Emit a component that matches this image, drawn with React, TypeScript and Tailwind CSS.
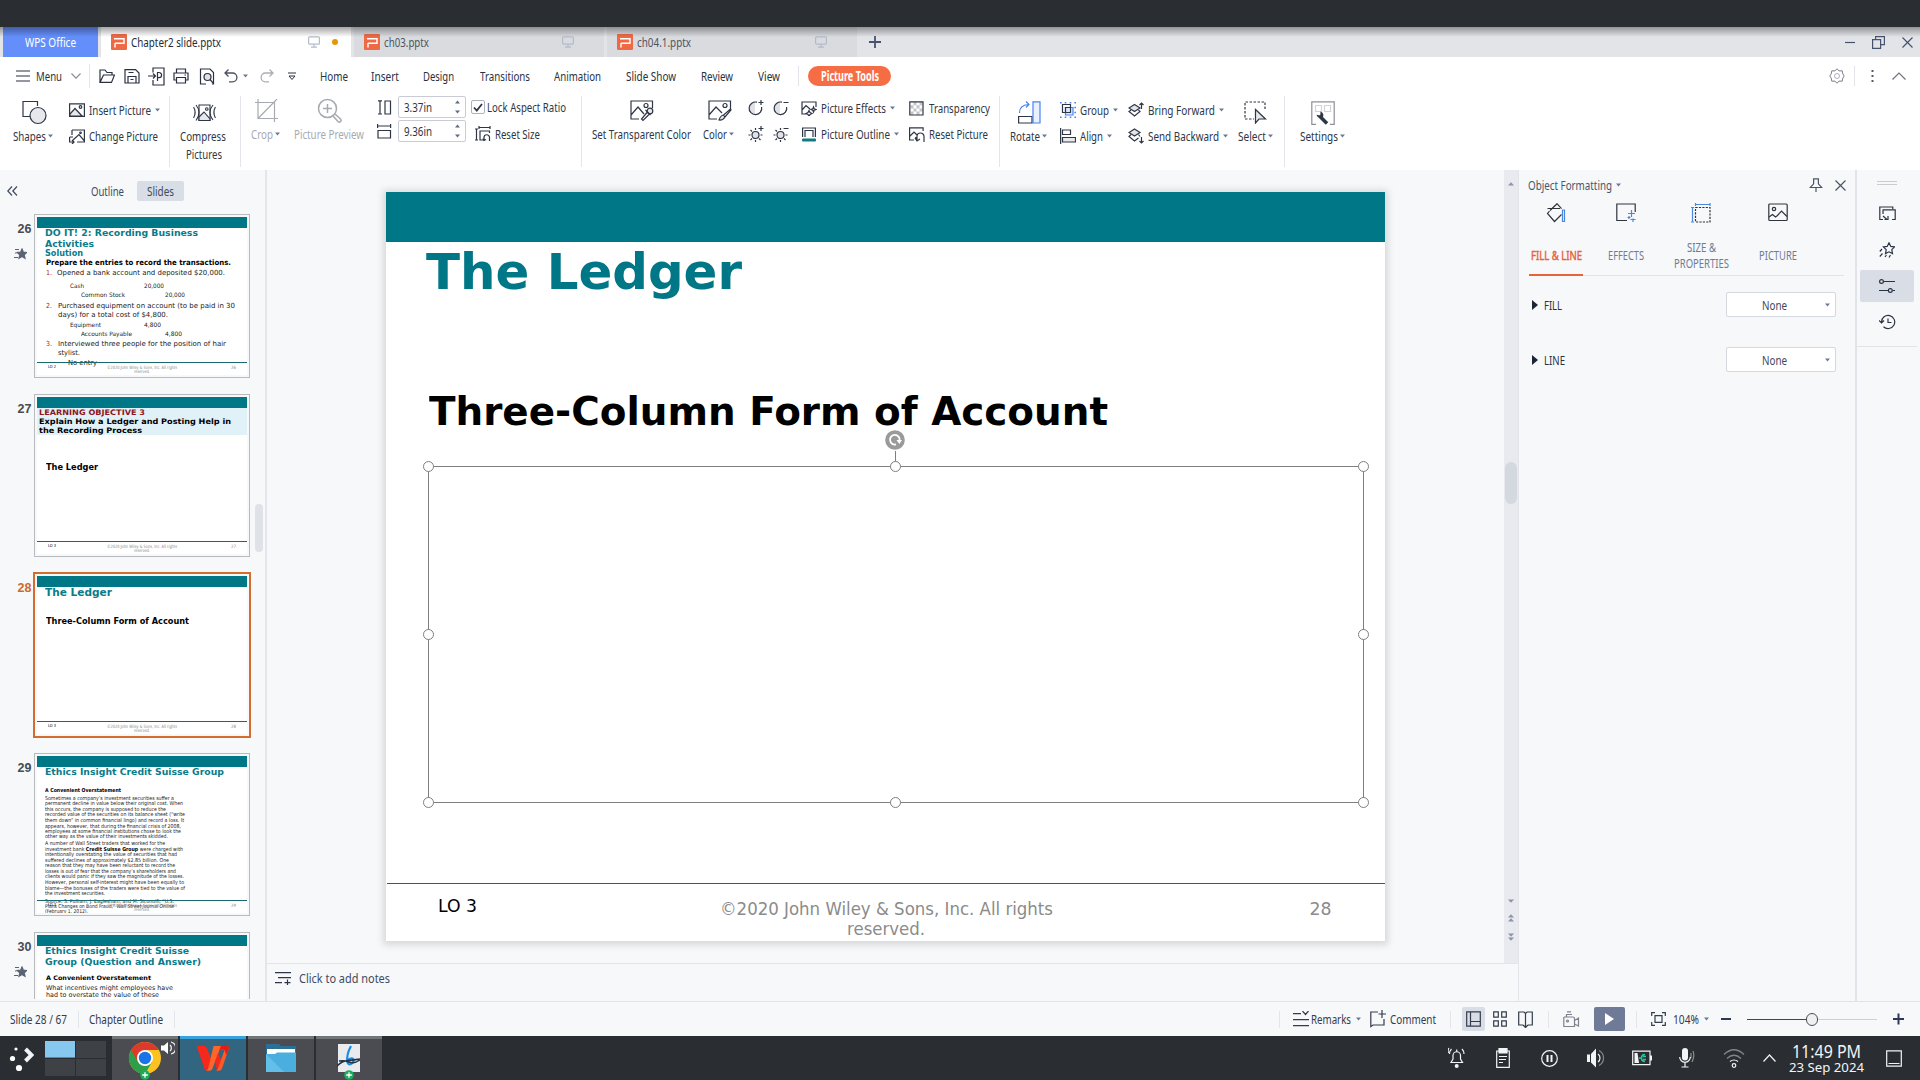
import React, { useLayoutEffect, useRef, useState } from "react";

/* Single-line label squeezed horizontally to the width given by its class. */
function T({ c = "", children }: { c?: string; children: React.ReactNode }) {
  const outer = useRef<HTMLSpanElement>(null);
  const inner = useRef<HTMLSpanElement>(null);
  const [scale, setScale] = useState(1);
  useLayoutEffect(() => {
    if (outer.current && inner.current && inner.current.offsetWidth > 0) {
      const natural = parseFloat(getComputedStyle(inner.current).width) || inner.current.offsetWidth;
      setScale(outer.current.clientWidth / natural);
    }
  }, []);
  return (
    <span ref={outer} className={"block shrink-0 whitespace-pre " + c}>
      <span ref={inner} className="inline-block origin-left" style={{ transform: `scaleX(${scale})` }}>
        {children}
      </span>
    </span>
  );
}

function Svg({ w, h, c = "", sw = 1.2, children }: { w: number; h: number; c?: string; sw?: number; children: React.ReactNode }) {
  return (
    <svg width={w} height={h} viewBox={`0 0 ${w} ${h}`} fill="none" stroke="currentColor" strokeWidth={sw} className={"block shrink-0 " + c}>
      {children}
    </svg>
  );
}

const Caret = ({ c = "" }: { c?: string }) => (
  <Svg w={5} h={4} c={"text-[#6b7a94] " + c}>
    <path d="M0 .5h5L2.500 3.500z" fill="currentColor" stroke="none" />
  </Svg>
);
const CaretUp = ({ c = "" }: { c?: string }) => (
  <Svg w={6} h={4} c={"text-[#8a94ab] " + c}>
    <path d="M0 3.500h6L3 .2z" fill="currentColor" stroke="none" />
  </Svg>
);

const PLogo = () => (
  <Svg w={16} h={16} sw={1.4} c="text-white">
    <rect width="16" height="16" rx="1" fill="#ee6a45" stroke="none" />
    <path d="M3 4.700h10v4.600H4M4 9v4.500" />
  </Svg>
);
const Monitor = ({ c = "" }: { c?: string }) => (
  <Svg w={12} h={12} c={"text-[#b3bacb] " + c}>
    <rect x=".6" y=".8" width="10.800" height="7.400" rx="1" />
    <path d="M6 8.200v3M3 11.200h6" />
  </Svg>
);

const Sep = ({ c }: { c: string }) => <div className={"w-px shrink-0 bg-[#e3e5ea] " + c} />;

function FileTab({ name, nw, c }: { name: string; nw: string; c: string }) {
  return (
    <div className={"flex h-[30px] w-[250px] shrink-0 items-center bg-[#d9dbdf] pl-[10px] text-[#4d5361] " + c}>
      <PLogo />
      <T c={"ml-[4px] " + nw}>{name}</T>
      <Monitor c="ml-auto mr-[30px]" />
    </div>
  );
}

function TabBar() {
  return (
    <div className="relative flex h-[30px] bg-[#e2e4e8]">
      <div className="ml-[3px] flex w-[95px] shrink-0 items-center justify-center bg-[#648ffb] text-white">
        <T c="w-[51px]">WPS Office</T>
      </div>
      <div className="ml-[3px] flex w-[250px] shrink-0 items-center bg-white pl-[10px] text-[#252b38]">
        <PLogo />
        <T c="ml-[4px] w-[90px]">Chapter2 slide.pptx</T>
        <Monitor c="ml-[87px]" />
        <div className="ml-[12px] size-[6px] rounded-full bg-[#e59700]" />
      </div>
      <FileTab name="ch03.pptx" nw="w-[45px]" c="ml-[3px]" />
      <FileTab name="ch04.1.pptx" nw="w-[54px]" c="ml-[3px]" />
      <Svg w={12} h={12} sw={1.8} c="ml-[12px] mt-[9px] text-[#46536f]">
        <path d="M6 0v12M0 6h12" />
      </Svg>
      <div className="ml-auto flex items-center text-[#46536f]">
        <Svg w={10} h={10} c="mr-[17px]">
          <path d="M0 5.500h10" />
        </Svg>
        <Svg w={13} h={13} c="mr-[17px]">
          <path d="M.6 3.600h8v8.800h-8zM3.600 3.600V.6h8.800v8h-3.800" />
        </Svg>
        <Svg w={11} h={11} c="mr-[7px]">
          <path d="M.5.5l10 10M10.500 .5l-10 10" />
        </Svg>
      </div>
      <div className="pointer-events-none absolute inset-x-0 top-0 h-[10px] bg-gradient-to-b from-black/35 to-transparent" />
    </div>
  );
}

function MenuRow() {
  return (
    <div className="flex h-[38px] items-center bg-white text-[#2a3140]">
      <Svg w={14} h={12} c="ml-[16px]">
        <path d="M0 1h14M0 6h14M0 11h14" />
      </Svg>
      <T c="ml-[6px] w-[26px]">Menu</T>
      <Svg w={10} h={6} c="ml-[9px] text-[#8b909b]">
        <path d="M.5.5L5 5.200 9.500 .5" />
      </Svg>
      <Sep c="ml-[8px] h-[24px]" />
      <Svg w={16} h={16} c="ml-[9px]">
        <path d="M1 14V2h5l2 2.500h5V7M1 14.400h11.500L15.500 7H4.500z" />
      </Svg>
      <Svg w={16} h={16} c="ml-[9px]">
        <path d="M1 1.600h10.500l3.500 3.500v9.900H1zM4 15V8.500h8V15M4.500 4.500h5M6.500 11.500h3" />
      </Svg>
      <Svg w={17} h={19} c="ml-[8px]">
        <path d="M5 5.500V1h11v17H5v-5M0 9h7.500M5 6.500L7.500 9 5 11.500M9.500 14V5.500h1.500a2.600 2.600 0 0 1 0 5.200H9.500" />
      </Svg>
      <Svg w={16} h={16} c="ml-[8px]">
        <path d="M3.500 5V1h9v4M3.500 12H1V5h14v7h-2.500M3.500 9.500h9V15h-9zM11.500 7h1.500" />
      </Svg>
      <Svg w={16} h={17} c="ml-[10px]">
        <path d="M7 16H1.500V1H11l3.500 3.500V16H13" />
        <circle cx="8.500" cy="9" r="3.500" fill="#dfe1e6" />
        <path d="M11 11.500l3.500 4" />
      </Svg>
      <Svg w={14} h={14} c="ml-[9px] text-[#4a505d]" sw={1.3}>
        <path d="M4.500 .5L1 4l3.500 3.500M1 4h7.500a4.300 4.300 0 0 1 0 8.800H5" />
      </Svg>
      <Caret c="ml-[5px]" />
      <Svg w={14} h={14} c="ml-[12px] text-[#aaadb4]" sw={1.3}>
        <path d="M9.500 .5L13 4 9.500 7.500M13 4H5.500a4.300 4.300 0 0 0 0 8.800H9" />
      </Svg>
      <Svg w={8} h={9} sw={1} c="ml-[14px]">
        <path d="M0 1h8M1 4l3 3.500L7 4z" />
      </Svg>
      <T c="ml-[24px] w-[28px]">Home</T>
      <T c="ml-[23px] w-[28px]">Insert</T>
      <T c="ml-[24px] w-[31px]">Design</T>
      <T c="ml-[26px] w-[50px]">Transitions</T>
      <T c="ml-[24px] w-[47px]">Animation</T>
      <T c="ml-[25px] w-[50px]">Slide Show</T>
      <T c="ml-[25px] w-[32px]">Review</T>
      <T c="ml-[25px] w-[22px]">View</T>
      <Sep c="ml-[18px] h-[20px]" />
      <div className="ml-[9px] flex h-[20px] w-[83px] items-center justify-center rounded-full bg-[#f66d45] font-bold text-white">
        <T c="w-[58px]">Picture Tools</T>
      </div>
      <Svg w={16} h={16} sw={1} c="ml-auto text-[#7b7f88]">
        <path d="M8 .8l2 2.100 3.200-.1.600 3.100L15.200 8l-1.400 2.100-.6 3.100-3.200-.1-2 2.100-2-2.100-3.200.1-.6-3.100L.8 8l1.400-2.100.6-3.100 3.200.1z" />
        <circle cx="8" cy="8" r="2.500" strokeOpacity=".6" />
      </Svg>
      <Sep c="ml-[9px] h-[20px]" />
      <Svg w={3} h={12} c="ml-[16px]">
        <path d="M1.500 0v2M1.500 5v2M1.500 10v2" stroke="#555b68" strokeWidth="2" />
      </Svg>
      <Svg w={14} h={8} c="ml-[18px] mr-[14px] text-[#6d727d]">
        <path d="M.5 7.500L7 1l6.500 6.500" />
      </Svg>
    </div>
  );
}

/* Large ribbon button: drawing on top, caption below. */
function Big({ c, icon, cap, capW, caret, up }: { c: string; icon: React.ReactNode; cap: string; capW: string; caret?: boolean; up?: boolean }) {
  return (
    <div className={"flex shrink-0 flex-col " + (up ? "pt-[1px] " : "pt-[3px] ") + c}>
      <div className="flex h-[28px] items-center justify-center">{icon}</div>
      <div className="flex h-[20px] items-center">
        <T c={capW}>{cap}</T>
        {caret && <Caret c="ml-[2px]" />}
      </div>
    </div>
  );
}

function Row({ icon, cap, capW, caret }: { icon: React.ReactNode; cap: string; capW: string; caret?: boolean }) {
  return (
    <div className="flex h-[26px] items-center">
      <div className="flex w-[20px] shrink-0">{icon}</div>
      <T c={capW}>{cap}</T>
      {caret && <Caret c="ml-[4px]" />}
    </div>
  );
}

const LAYERS_UP = (
  <Svg w={16} h={16}>
    <path d="M6.500 2.500L12 6 6.500 9.500 1 6z" fill="#e3e5ea" />
    <path d="M3 8L1 9.500l5.500 4.500L12 9.500 10.500 8M13.500 7V1M11.500 3l2-2 2 2" />
  </Svg>
);
const LAYERS_DOWN = (
  <Svg w={16} h={16}>
    <path d="M6.500 1L12 4.500 6.500 8 1 4.500z" fill="#e3e5ea" />
    <path d="M3 6.500L1 8.500 6.500 13l4-3M13.500 9v6M11.500 13l2 2 2-2M12 8.500l-1.500-2" />
  </Svg>
);

function Spin({ v }: { v: string }) {
  return (
    <div className="ml-[6px] flex h-[22px] w-[68px] items-center rounded-[2px] border border-[#c9ccd6] bg-white pl-[5px]">
      <T c="w-[28px]">{v}</T>
      <div className="ml-auto mr-[5px] flex flex-col gap-[6px]">
        <Svg w={5} h={4}>
          <path d="M0 3.500h5L2.500 .5z" fill="#5d6c88" stroke="none" />
        </Svg>
        <Svg w={5} h={4}>
          <path d="M0 .5h5L2.500 3.500z" fill="#5d6c88" stroke="none" />
        </Svg>
      </div>
    </div>
  );
}

function Ribbon() {
  return (
    <div className="flex h-[75px] items-start bg-white text-[#2f3645]">
      <Big
        c="ml-[13px] w-[40px]"
        cap="Shapes"
        capW="w-[33px]"
        caret
        icon={
          <Svg w={25} h={25} c="ml-[2px]">
            <path d="M8 16.500H1V1.500h14.500V6" />
            <circle cx="16" cy="15.500" r="8" fill="#e6e8ec" />
          </Svg>
        }
      />
      <div className="ml-[16px] w-[92px] shrink-0 pt-[2px]">
        <Row
          cap="Insert Picture"
          capW="w-[62px]"
          caret
          icon={
            <Svg w={16} h={14}>
              <path d="M.6.8h14.800v12.500H.6z" />
              <path d="M1 11l5-5.500 7 7.500H1z" fill="#e6e8ec" />
              <circle cx="11.500" cy="4" r="1.300" />
            </Svg>
          }
        />
        <Row
          cap="Change Picture"
          capW="w-[69px]"
          icon={
            <Svg w={16} h={15}>
              <path d="M4 8H.6M3 1h12.400v12H8M3 1v5M4 11l6-5.500 5 6M.6 8v5h4M3 11l2 2-2 2" />
              <circle cx="11.500" cy="3.800" r=".8" />
            </Svg>
          }
        />
      </div>
      <Sep c="ml-[8px] mt-px h-[71px]" />
      <div className="ml-[10px] w-[46px] shrink-0">
        <Big
          c="w-[46px]"
          cap="Compress"
          capW="w-[46px]"
          icon={
            <Svg w={23} h={18} sw={1.1} c="ml-[2px] mt-px">
              <path d="M6 1h11v15.500H6z" />
              <path d="M6 13l5-5 6 7v1.500H6z" fill="#e6e8ec" />
              <circle cx="13.800" cy="5" r="1.300" />
              <path d="M3 1q3 3.500 3 7.500T3 16.500M20 1q-3 3.500-3 7.500t3 7.500M.6 3q3 5.500 0 11M22.400 3q-3 5.500 0 11" />
            </Svg>
          }
        />
        <T c="ml-[6px] -mt-[2px] w-[36px]">Pictures</T>
      </div>
      <Sep c="ml-[14px] mt-px h-[71px]" />
      <Big
        up
        c="ml-[10px] w-[31px] text-[#a7aab1]"
        cap="Crop"
        capW="w-[22px]"
        caret
        icon={
          <Svg w={23} h={23} c="-ml-[1px]">
            <path d="M3 0v19.500h20M0 3.500h19.500V23M3.500 19L22 0" />
          </Svg>
        }
      />
      <Big
        up
        c="ml-[12px] w-[70px] text-[#a7aab1]"
        cap="Picture Preview"
        capW="w-[70px]"
        icon={
          <Svg w={25} h={25} sw={1.5}>
            <circle cx="10.500" cy="10.500" r="9" />
            <path d="M10.500 6v9M6 10.500h9M16 18l5 5.500a1.600 1.600 0 0 0 2.500-2.500L18 16" />
          </Svg>
        }
      />
      <div className="ml-[12px] flex w-[90px] shrink-0 flex-col">
        <div className="flex h-[24px] items-center">
          <Svg w={16} h={15}>
            <path d="M2 .8h4M2 14h4M4 .8V14M9 1h5.500v13H9z" />
          </Svg>
          <Spin v="3.37in" />
        </div>
        <div className="flex h-[24px] items-center">
          <Svg w={16} h={15}>
            <path d="M1.600 0v4M14.600 0v4M1.600 2h13M2 6.500h12.500V14H2z" />
          </Svg>
          <Spin v="9.36in" />
        </div>
      </div>
      <div className="ml-[5px] -mt-px w-[95px] shrink-0">
        <div className="flex h-[26px] items-center">
          <div className="flex size-[14px] shrink-0 items-center justify-center rounded-[2px] border border-[#aeb2bd]">
            <Svg w={10} h={9} sw={1.8}>
              <path d="M1 4.500l2.800 3L9 1" />
            </Svg>
          </div>
          <T c="ml-[2px] w-[79px]">Lock Aspect Ratio</T>
        </div>
        <div className="flex h-[27px] items-center pl-[4px]">
          <Svg w={16} h={16}>
            <path d="M0 3h3M0 14h3M1.500 3v11M4 1.500h11M4 0v3M15 0v3M9 14H5V5h9.500v2M9 14v-2.500a2.500 2.500 0 0 1 5.500 0V15M8 12.500l1 2 2-1" />
          </Svg>
          <T c="ml-[4px] w-[45px]">Reset Size</T>
        </div>
      </div>
      <Sep c="ml-[15px] mt-px h-[71px]" />
      <Big
        up
        c="ml-[10px] w-[99px]"
        cap="Set Transparent Color"
        capW="w-[99px]"
        icon={
          <Svg w={24} h={22} c="mt-px ml-px">
            <path d="M9 19H1V1h21.500v7M1 15l7-8 6 7" />
            <circle cx="16" cy="5.500" r="2" />
            <circle cx="20" cy="11" r="2.800" fill="#e6e8ec" />
            <path d="M15.500 10l5 5M17 12.500l-5.500 6.500 1.500 1.500 6-6" />
          </Svg>
        }
      />
      <Big
        up
        c="ml-[12px] w-[33px]"
        cap="Color"
        capW="w-[24px]"
        caret
        icon={
          <Svg w={24} h={22} c="mt-px ml-px">
            <path d="M9 19H1V1h21.500v8M1 15l7-8 6 6" />
            <circle cx="17" cy="5.500" r="2" />
            <path d="M22.500 9l-7 6 1.500 2 6-7zM15.500 15q-3 .5-4.500 5 4 .5 6-3" fill="#e6e8ec" />
          </Svg>
        }
      />
      <div className="ml-[12px] grid w-[41px] shrink-0 grid-cols-2 gap-x-[9px] gap-y-[10px] pt-[5px]">
        <Svg w={16} h={16}>
          <path d="M7 2v11.500a6 6 0 0 1 0-12z" fill="#e0e2e7" stroke="none" />
          <path d="M9 2.200A6.300 6.300 0 1 0 13.600 7M13 0v5M10.500 2.500h5" />
        </Svg>
        <Svg w={16} h={16}>
          <path d="M7 2v11.500a6 6 0 0 1 0-12z" fill="#e0e2e7" stroke="none" />
          <path d="M9 2.200A6.300 6.300 0 1 0 13.600 7M10.500 2.500h5" />
        </Svg>
        <Svg w={16} h={16}>
          <circle cx="7.500" cy="9" r="3.500" fill="#e0e2e7" />
          <path d="M7.500 2v2M7.500 14v2M.5 9h2M12.500 9h2M2.500 4l1.500 1.500M2.500 14L4 12.500M12.500 14L11 12.500M13 0v5M10.500 2.500h5" />
        </Svg>
        <Svg w={16} h={16}>
          <circle cx="7.500" cy="9" r="3.500" fill="#e0e2e7" />
          <path d="M7.500 2v2M7.500 14v2M.5 9h2M12.500 9h2M2.500 4l1.500 1.500M2.500 14L4 12.500M12.500 14L11 12.500M10.500 2.500h5" />
        </Svg>
      </div>
      <div className="ml-[12px] w-[98px] shrink-0">
        <Row
          cap="Picture Effects"
          capW="w-[65px]"
          caret
          icon={
            <Svg w={16} h={15}>
              <path d="M6 13H1V1h14v5M1 9l4-4.500L9 8M8 9.500l1 2 2 1-2 1-1 2-1-2-2-1 2-1zM12.500 6l.7 1.800L15 8.500l-1.800.7-.7 1.800-.7-1.800L10 8.500l1.800-.7z" />
            </Svg>
          }
        />
        <Row
          cap="Picture Outline"
          capW="w-[69px]"
          caret
          icon={
            <Svg w={16} h={15}>
              <path d="M1.600 10V1h12.800v9M4 10V3.500h8V10" />
              <rect x="1" y="11.500" width="14" height="3" rx="1" fill="#127a80" stroke="none" />
            </Svg>
          }
        />
      </div>
      <div className="ml-[10px] w-[80px] shrink-0">
        <Row
          cap="Transparency"
          capW="w-[61px]"
          icon={
            <Svg w={15} h={15} c="-mr-px">
              <path d="M4.500 1h3v3.200h-3zM10.500 1h3v3.200h-3zM1.500 4.200h3v3.200h-3zM7.500 4.200h3v3.200h-3zM4.500 7.400h3v3.200h-3zM10.500 7.400h3v3.200h-3zM7.500 10.600h3v3.200h-3zM1.500 10.600h3v3.200h-3z" fill="#c3c5cb" stroke="none" />
              <path d="M.8.8h13.200v13.200H.8z" />
            </Svg>
          }
        />
        <Row
          cap="Reset Picture"
          capW="w-[59px]"
          icon={
            <Svg w={16} h={15}>
              <path d="M5 13H.6V.8h13.500V4M1 9l4-4 3 3M8 13l-1.500-3M8 14V9.500a3.500 3.500 0 0 1 7 0V15M6 11l2 3 3-2" />
            </Svg>
          }
        />
      </div>
      <Sep c="ml-[10px] mt-px h-[71px]" />
      <Big
        c="ml-[10px] w-[38px]"
        cap="Rotate"
        capW="w-[30px]"
        caret
        icon={
          <Svg w={23} h={23} c="mt-px">
            <path d="M.6 15.500H14V22H.6z" />
            <path d="M15 .8h7V22h-7z" fill="#e9f0fe" stroke="#4a84f0" />
            <path d="M1.500 12q0-8 9-8.500M8 .5l3 3-3 3" stroke="#4a84f0" />
          </Svg>
        }
      />
      <div className="ml-[12px] w-[59px] shrink-0 pt-[2px]">
        <Row
          cap="Group"
          capW="w-[29px]"
          caret
          icon={
            <Svg w={16} h={16}>
              <path d="M5.500 5.500h7.500v7.500H5.500z" fill="#dfe9fd" stroke="#4a84f0" />
              <path d="M10.500 5.500V2.500h-8v8h3M5.500 5.500h5v5h-5z" />
              <path d="M.8.8h.01M.8 15.200h.01M15.200.8h.01M15.200 15.200h.01M5.500.8h.01M10.500 .8h.01M15.200 5.500h.01M15.200 10.500h.01M5.500 15.200h.01M10.500 15.200h.01" stroke="#4a84f0" strokeWidth="1.600" strokeLinecap="square" />
            </Svg>
          }
        />
        <Row
          cap="Align"
          capW="w-[23px]"
          caret
          icon={
            <Svg w={16} h={16}>
              <path d="M.6 0v16M2.500 2h8v4.500h-8z" />
              <path d="M2.500 9.500h13V14h-13z" fill="#e6e8ec" />
            </Svg>
          }
        />
      </div>
      <div className="ml-[9px] w-[100px] shrink-0 pt-[2px]">
        <Row cap="Bring Forward" capW="w-[67px]" caret icon={LAYERS_UP} />
        <Row cap="Send Backward" capW="w-[71px]" caret icon={LAYERS_DOWN} />
      </div>
      <Big
        c="ml-[10px] w-[36px]"
        cap="Select"
        capW="w-[28px]"
        caret
        icon={
          <Svg w={24} h={23}>
            <path d="M21 8V1H1v17h9" strokeDasharray="2.500 1.500" />
            <path d="M11.500 8.500v13.500l3.500-4h6.500z" fill="#e6e8ec" />
          </Svg>
        }
      />
      <Sep c="ml-[10px] mt-px h-[71px]" />
      <Big
        c="ml-[15px] w-[46px]"
        cap="Settings"
        capW="w-[38px]"
        caret
        icon={
          <Svg w={24} h={24} c="mt-px">
            <path d="M5 23.400H.8V.8h22.400v22.600H19" stroke="#8d9098" />
            <path d="M4.500 4.500h6v6h-6zM13.500 4.500h6v6h-6z" stroke="#d2d4d8" />
            <path d="M9 15.500l7 7" strokeWidth="3.500" />
            <path d="M6.500 14.500a3 3 0 0 0 5 1 3 3 0 0 0-1.500-4v2.500l-1.500 1z" fill="currentColor" />
          </Svg>
        }
      />
    </div>
  );
}

/* Text run on a slide; slides are free canvases, so runs carry their own place. */
const L = ({ c, children }: { c: string; children: React.ReactNode }) => (
  <T c={"absolute leading-none " + c}>{children}</T>
);

function ThumbFooter({ lo, n, short }: { lo: string; n: string; short?: boolean }) {
  return (
    <div className={"absolute left-0 h-[13px] w-full " + (short ? "top-[144px]" : "top-[145px]")}>
      <div className="h-px w-full bg-[#17696f]" />
      <L c="left-[11px] top-[3px] w-[8px] text-[4.200px] text-black">{lo}</L>
      <L c="left-[70px] top-[3.600px] w-[70px] text-[4.500px] text-[#888]">©2020 John Wiley &amp; Sons, Inc. All rights</L>
      <L c="left-[97px] top-[7.600px] w-[16px] text-[4.500px] text-[#888]">reserved.</L>
      <L c="left-[194px] top-[3.600px] w-[5px] text-[4.500px] text-[#888]">{n}</L>
    </div>
  );
}

function Thumb({ n, star, sel, short, gap, lo, children }: { n: string; star?: boolean; sel?: boolean; short?: boolean; gap: string; lo: string; children: React.ReactNode }) {
  return (
    <div className={"flex shrink-0 " + gap}>
      <div className="w-[34px] shrink-0">
        <div className={"ml-[17.500px] mt-[5px] font-['Liberation_Sans'] text-[12.500px] font-bold " + (sel ? "text-[#cc6a2c]" : "text-[#474b52]")}>{n}</div>
        {star && (
          <Svg w={13} h={12} c="ml-[14px] mt-[9px] text-[#5a6275]">
            <path d="M8 1l1.400 3.200 3.400.3-2.600 2.300.8 3.500L8 8.500l-3 1.800.8-3.500L3.200 4.500l3.400-.3z" fill="currentColor" />
            <path d="M1 1.500h4M1 5h1.500M0 9.500h4" />
          </Svg>
        )}
      </div>
      <div
        className={
          sel
            ? "-m-px h-[166px] w-[218px] border-2 border-[#d36d2d] p-[2px]"
            : short
              ? "h-[163px] w-[216px] border border-[#b8babd] p-[2px]"
              : "h-[164px] w-[216px] border border-[#b8babd] p-[2px]"
        }
      >
        <div className="relative h-full w-[210px] overflow-hidden bg-white font-['DejaVu_Sans'] text-[#222]">
          <div className="h-[11px] bg-[#007787]" />
          <div className="absolute inset-x-0 top-[11px] -bottom-[11px]">
            <div className="absolute inset-x-0 -top-[10.300px] bottom-0">{children}</div>
          </div>
          <ThumbFooter lo={lo} n={n} short={short} />
        </div>
      </div>
    </div>
  );
}

function LeftPanel() {
  return (
    <div className="relative flex w-[265px] shrink-0 flex-col overflow-hidden pb-[2px]">
      <div className="flex h-[44px] shrink-0 items-center pb-[2px] text-[#414a5e]">
        <Svg w={11} h={10} c="ml-[7px]">
          <path d="M5 .5L.8 5 5 9.500M10 .5L5.800 5 10 9.500" />
        </Svg>
        <T c="ml-[73px] w-[33px]">Outline</T>
        <div className="ml-[13px] flex h-[20px] w-[47px] items-center justify-center rounded-[2px] bg-[#d9dee6]">
          <T c="w-[27px]">Slides</T>
        </div>
      </div>
      <div className="flex min-h-0 grow flex-col overflow-hidden">
        <Thumb n="26" star gap="" lo="LO 2">
          <L c="left-[8.300px] top-[11.400px] w-[153px] text-[9px] font-bold text-[#077c8b]">DO IT! 2: Recording Business</L>
          <L c="left-[8.300px] top-[22.400px] w-[49px] text-[9px] font-bold text-[#077c8b]">Activities</L>
          <L c="left-[8.300px] top-[32.200px] w-[38px] text-[8px] font-bold text-[#077c8b]">Solution</L>
          <L c="left-[9px] top-[41.600px] w-[185px] text-[7.500px] font-bold text-black">Prepare the entries to record the transactions.</L>
          <L c="left-[9px] top-[52.300px] w-[6px] text-[7px] text-[#a8242c]">1.</L>
          <L c="left-[20px] top-[52.300px] w-[168px] text-[7px]">Opened a bank account and deposited $20,000.</L>
          <L c="left-[33px] top-[64.800px] w-[14px] text-[6px]">Cash</L>
          <L c="left-[107px] top-[64.800px] w-[20px] text-[6px]">20,000</L>
          <L c="left-[43.500px] top-[74.400px] w-[44px] text-[6px]">Common Stock</L>
          <L c="left-[128px] top-[74.400px] w-[20px] text-[6px]">20,000</L>
          <L c="left-[9px] top-[85.300px] w-[6px] text-[7px] text-[#a8242c]">2.</L>
          <L c="left-[20.700px] top-[85.300px] w-[177px] text-[7px]">Purchased equipment on account (to be paid in 30</L>
          <L c="left-[20.700px] top-[94.300px] w-[110px] text-[7px]">days) for a total cost of $4,800.</L>
          <L c="left-[33px] top-[104.400px] w-[31px] text-[6px]">Equipment</L>
          <L c="left-[107px] top-[104.400px] w-[17px] text-[6px]">4,800</L>
          <L c="left-[43.500px] top-[113.400px] w-[51px] text-[6px]">Accounts Payable</L>
          <L c="left-[128px] top-[113.400px] w-[17px] text-[6px]">4,800</L>
          <L c="left-[9px] top-[123.200px] w-[6px] text-[7px] text-[#a8242c]">3.</L>
          <L c="left-[20.700px] top-[123.200px] w-[168px] text-[7px]">Interviewed three people for the position of hair</L>
          <L c="left-[20.700px] top-[132.300px] w-[22px] text-[7px]">stylist.</L>
          <L c="left-[30.500px] top-[142px] w-[29px] text-[7px]">No entry</L>
        </Thumb>
        <Thumb n="27" short gap="mt-[16px]" lo="LO 3">
          <div className="absolute inset-x-0 top-[10.300px] h-[27px] bg-[#e0f1f7]" />
          <L c="left-[2px] top-[11px] w-[106px] text-[7.600px] font-bold text-[#8f1622]">LEARNING OBJECTIVE 3</L>
          <L c="left-[2px] top-[20.200px] w-[192px] text-[7.600px] font-bold text-black">Explain How a Ledger and Posting Help in</L>
          <L c="left-[2px] top-[29.200px] w-[103px] text-[7.600px] font-bold text-black">the Recording Process</L>
          <L c="left-[9px] top-[66.500px] w-[52px] text-[8px] font-bold text-black">The Ledger</L>
        </Thumb>
        <Thumb n="28" sel gap="mt-[16px]" lo="LO 3">
          <L c="left-[8.300px] top-[10.600px] w-[67px] text-[11px] font-bold text-[#077c8b]">The Ledger</L>
          <L c="left-[9px] top-[41.300px] w-[143px] text-[8px] font-bold text-black">Three-Column Form of Account</L>
        </Thumb>
        <Thumb n="29" short gap="mt-[16px]" lo="LO 3">
          <L c="left-[8.300px] top-[11.300px] w-[179px] text-[8.700px] font-bold text-[#077c8b]">Ethics Insight Credit Suisse Group</L>
          <L c="left-[7.700px] top-[31px] w-[76px] text-[5.300px] font-bold text-black">A Convenient Overstatement</L>
          <L c="left-[7.700px] top-[39px] w-[129px] text-[5.300px]">Sometimes a company’s investment securities suffer a</L>
          <L c="left-[7.700px] top-[44.200px] w-[138px] text-[5.300px]">permanent decline in value below their original cost. When</L>
          <L c="left-[7.700px] top-[50px] w-[121px] text-[5.300px]">this occurs, the company is supposed to reduce the</L>
          <L c="left-[7.700px] top-[55px] w-[140px] text-[5.300px]">recorded value of the securities on its balance sheet (“write</L>
          <L c="left-[7.700px] top-[61px] w-[139px] text-[5.300px]">them down” in common financial lingo) and record a loss. It</L>
          <L c="left-[7.700px] top-[67px] w-[136px] text-[5.300px]">appears, however, that during the financial crisis of 2008,</L>
          <L c="left-[7.700px] top-[72px] w-[136px] text-[5.300px]">employees at some financial institutions chose to look the</L>
          <L c="left-[7.700px] top-[77.300px] w-[123px] text-[5.300px]">other way as the value of their investments skidded.</L>
          <L c="left-[7.700px] top-[84px] w-[120px] text-[5.300px]">A number of Wall Street traders that worked for the</L>
          <L c="left-[7.700px] top-[90px] w-[138px] text-[5.300px]">investment bank <b className="text-black">Credit Suisse Group</b> were charged with</L>
          <L c="left-[7.700px] top-[95px] w-[132px] text-[5.300px]">intentionally overstating the value of securities that had</L>
          <L c="left-[7.700px] top-[101px] w-[124px] text-[5.300px]">suffered declines of approximately $2.85 billion. One</L>
          <L c="left-[7.700px] top-[106px] w-[130px] text-[5.300px]">reason that they may have been reluctant to record the</L>
          <L c="left-[7.700px] top-[112px] w-[131px] text-[5.300px]">losses is out of fear that the company’s shareholders and</L>
          <L c="left-[7.700px] top-[117.700px] w-[139px] text-[5.300px]">clients would panic if they saw the magnitude of the losses.</L>
          <L c="left-[7.700px] top-[123px] w-[139px] text-[5.300px]">However, personal self-interest might have been equally to</L>
          <L c="left-[7.700px] top-[129px] w-[140px] text-[5.300px]">blame—the bonuses of the traders were tied to the value of</L>
          <L c="left-[7.700px] top-[134px] w-[60px] text-[5.300px]">the investment securities.</L>
          <L c="left-[7.700px] top-[142px] w-[129px] text-[5.300px]">Source: S. Pulliam, J. Eaglesham, and M. Siconolfi, “U.S.</L>
          <L c="left-[7.700px] top-[147px] w-[129px] text-[5.300px]">Plans Changes on Bond Fraud,” <i>Wall Street Journal Online</i></L>
          <L c="left-[7.700px] top-[152.500px] w-[43px] text-[5.300px]">(February 1, 2012).</L>
        </Thumb>
        <Thumb n="30" star gap="mt-[16px]" lo="LO 3">
          <L c="left-[8.300px] top-[11.400px] w-[144px] text-[9px] font-bold text-[#077c8b]">Ethics Insight Credit Suisse</L>
          <L c="left-[8.300px] top-[22.400px] w-[156px] text-[9px] font-bold text-[#077c8b]">Group (Question and Answer)</L>
          <L c="left-[9px] top-[39px] w-[105px] text-[6.200px] font-bold text-black">A Convenient Overstatement</L>
          <L c="left-[9px] top-[49.300px] w-[127px] text-[6.500px]">What incentives might employees have</L>
          <L c="left-[9px] top-[56.300px] w-[113px] text-[6.500px]">had to overstate the value of these</L>
        </Thumb>
      </div>
      <div className="absolute left-[255px] top-[334px] h-[48px] w-[8px] rounded-full bg-[#dfe2e6]" />
    </div>
  );
}

const Handle = ({ c }: { c: string }) => (
  <div className={"absolute size-[11px] rounded-full border border-[#7f7f7f] bg-white " + c} />
);

function Canvas() {
  return (
    <div className="flex min-w-0 grow flex-col border-l-2 border-[#e4e6eb]">
      <div className="flex h-[794px] border-b border-[#e2e4ea]">
        <div className="relative ml-[119px] mt-[22px] h-[749px] w-[999px] shrink-0 bg-white font-['DejaVu_Sans'] shadow-[0_1px_7px_3px_rgba(0,0,0,0.13)]">
          <div className="h-[50px] bg-[#007787]" />
          <L c="left-[40px] top-[55px] w-[316px] text-[50px] font-bold text-[#007787]">The Ledger</L>
          <L c="left-[43px] top-[200px] w-[679px] text-[39.500px] font-bold text-black">Three-Column Form of Account</L>
          <div className="absolute left-[42px] top-[274px] h-[337px] w-[936px] border border-[#7f7f7f]">
            <div className="absolute left-[466px] top-[-16px] h-[16px] w-px bg-[#7f7f7f]" />
            <Handle c="left-[-6px] top-[-6px]" />
            <Handle c="left-[461px] top-[-6px]" />
            <Handle c="left-[929px] top-[-6px]" />
            <Handle c="left-[-6px] top-[162px]" />
            <Handle c="left-[929px] top-[162px]" />
            <Handle c="left-[-6px] top-[330px]" />
            <Handle c="left-[461px] top-[330px]" />
            <Handle c="left-[929px] top-[330px]" />
            <Svg w={20} h={20} sw={1.8} c="absolute left-[456px] top-[-37px] text-white">
              <circle cx="10" cy="10" r="9.800" fill="#9a9a9a" stroke="none" />
              <path d="M11 14.400A4.800 4.800 0 1 1 14.600 10.500" />
              <path d="M11.500 10h5.500l-2.700 4z" fill="currentColor" stroke="none" />
            </Svg>
          </div>
          <div className="absolute left-[1px] right-0 top-[691px] h-px bg-[#17696f]" />
          <L c="left-[52px] top-[706px] w-[39px] text-[17.300px] text-black">LO 3</L>
          <L c="left-[334px] top-[708.500px] w-[333px] text-[17.300px] text-[#8b8b8b]">©2020 John Wiley &amp; Sons, Inc. All rights</L>
          <L c="left-[461px] top-[728.500px] w-[78px] text-[17.300px] text-[#8b8b8b]">reserved.</L>
          <L c="left-[923.500px] top-[709px] w-[22px] text-[17.300px] text-[#8b8b8b]">28</L>
        </div>
        <div className="ml-auto flex w-[14px] shrink-0 flex-col items-center bg-[#e8eaef] pt-[12px]">
          <CaretUp />
          <div className="mt-[276px] h-[42px] w-[12px] rounded-full bg-[#d4d8df]" />
          <CaretUp c="mt-[395px] rotate-180" />
          <CaretUp c="mt-[11px]" />
          <CaretUp />
          <CaretUp c="mt-[11px] rotate-180" />
          <CaretUp c="rotate-180" />
        </div>
      </div>
      <div className="flex grow items-center pb-[9px] text-[#414a5e]">
        <Svg w={16} h={14} c="ml-[8px] text-[#2c3450]">
          <path d="M0 1.600h16M3 6.600h13M0 11.600h7M9.500 11.600h6M12.500 8.600v6" />
        </Svg>
        <T c="ml-[8px] w-[91px]">Click to add notes</T>
      </div>
    </div>
  );
}

function FormatPanel() {
  const prop = (name: string, nw: string, c: string) => (
    <div className={"flex h-[25px] items-center " + c}>
      <Svg w={6} h={10} c="ml-[13px] text-[#1d2434]">
        <path d="M0 0l6 5-6 5z" fill="currentColor" stroke="none" />
      </Svg>
      <T c={"ml-[6px] text-[#2a3140] " + nw}>{name}</T>
      <div className="ml-auto mr-[19px] flex h-[25px] w-[110px] items-center rounded-[2px] border border-[#d5d8de] bg-white pl-[35px] text-[#3f475a]">
        <T c="w-[25px]">None</T>
        <Caret c="ml-auto mr-[5px]" />
      </div>
    </div>
  );
  return (
    <div className="flex w-[337px] shrink-0 flex-col border-l border-[#e2e4ea]">
      <div className="mt-[5px] flex h-[20px] items-center text-[#4c5468]">
        <T c="ml-[9px] w-[84px]">Object Formatting</T>
        <Caret c="ml-[4px]" />
        <Svg w={14} h={14} c="ml-auto">
          <path d="M4 .8h6M4.600 .8v5L1.200 9.500h11.600L9.400 5.800v-5M7 9.500V14" />
        </Svg>
        <Svg w={11} h={11} c="ml-[12px] mr-[9px]">
          <path d="M.5.5l10 10M10.500 .5l-10 10" />
        </Svg>
      </div>
      <div className="mr-[11px] ml-[10px] flex h-[81px] border-b border-[#e1e3e8] text-[#6f7b94]">
        <div className="-mb-px flex w-[54px] flex-col items-center border-b-2 border-[#e8623a] text-[#e8623a]">
          <Svg w={20} h={20} c="mt-[8px] text-[#30343d]">
            <path d="M1.500 5.500H14M3.500 8L1.500 10.500l7 8 7-7M4 7.500l7-6.800 4.500 5" />
            <path d="M16.500 7h2v11.500h-2z" stroke="#4d87dd" />
          </Svg>
          <T c="mt-[22px] w-[51px] [-webkit-text-stroke:0.500px]">FILL &amp; LINE</T>
        </div>
        <div className="ml-[25px] flex w-[36px] flex-col items-center">
          <Svg w={20} h={20} c="mt-[8px] text-[#30343d]">
            <path d="M11 17.500H.8V1h18.400v8" />
            <path d="M15.500 7v7M12 10.500h7M17 15.500v3.500M14.500 16.500h5M11.500 14.500h3M13 13v3" stroke="#4d87dd" />
          </Svg>
          <T c="mt-[22px] w-[36px]">EFFECTS</T>
        </div>
        <div className="ml-[30px] flex w-[55px] flex-col items-center leading-[16px]">
          <Svg w={20} h={20} c="-ml-[2px] mt-[8px] text-[#30343d]">
            <path d="M4.500 4.500h14.500v14.500H4.500z" strokeDasharray="2.200 1.200" />
            <path d="M4.500 0v3M19 0v3M4.500 1.500H19M0 4.500h3M0 19h3M1.500 4.500V19" stroke="#4d87dd" />
          </Svg>
          <T c="mt-[16px] w-[29px]">SIZE &amp;</T>
          <T c="w-[55px]">PROPERTIES</T>
        </div>
        <div className="ml-[30px] flex w-[38px] flex-col items-center">
          <Svg w={20} h={20} c="mt-[8px] text-[#30343d]">
            <rect x=".8" y="1" width="18.400" height="16.500" rx="1" />
            <circle cx="6" cy="6" r="1.700" />
            <path d="M1 14l3.500-2.500L7.500 14l2-1.500 4-4.500 5.500 5.500" />
          </Svg>
          <T c="mt-[22px] w-[38px]">PICTURE</T>
        </div>
      </div>
      {prop("FILL", "w-[18px]", "mt-[16px]")}
      {prop("LINE", "w-[21px]", "mt-[30px]")}
    </div>
  );
}

function SideStrip() {
  return (
    <div className="flex w-[65px] shrink-0 flex-col items-center border-l-2 border-[#e2e4ea] pr-[3px] text-[#2c3444]">
      <div className="mt-[11px] h-[4px] w-[20px] border-y border-[#c9ccd2]" />
      <div className="flex h-[36px] items-center pt-[22px]">
        <Svg w={17} h={16}>
          <path d="M4 13.500H.8V1h13v2M4 3.500V8M4 3.800h12.200v9.700H13M4 10l4 3.500M5.500 13.500h3.500V10" />
        </Svg>
      </div>
      <div className="mt-[11px] flex h-[36px] items-center">
        <Svg w={16} h={16}>
          <path d="M10 .8l1.800 3.600 3.800.5-2.800 2.800.7 3.900L10 9.800l-3.500 1.800.7-3.900-2.800-2.800 3.800-.5zM3 7L.8 9.500M3.500 11.500L.8 14.500M7.500 13L6 15M11.500 13L10 15.500" />
        </Svg>
      </div>
      <div className="mt-[2px] flex h-[32px] w-[54px] items-center justify-center rounded-[2px] bg-[#d9dee6]">
        <Svg w={16} h={14}>
          <circle cx="2.500" cy="2.500" r="1.900" />
          <path d="M4.500 2.500H16M0 11.500h9M13.500 11.500H16" />
          <circle cx="11.300" cy="11.500" r="1.900" />
        </Svg>
      </div>
      <div className="mt-[2px] flex h-[36px] items-center">
        <Svg w={17} h={16}>
          <path d="M2.500 8a6.600 6.600 0 1 1 2 4.700M0 6.500l2.500 2.500L5 6.500M9 4.500V8.500h3.500" />
        </Svg>
      </div>
      <div className="mt-[6px] h-px w-[60px] bg-[#e2e4ea]" />
    </div>
  );
}

function StatusBar() {
  return (
    <div className="flex h-[35px] items-center border-t border-[#e2e4ea] text-[#343b4b]">
      <T c="ml-[10px] w-[57px]">Slide 28 / 67</T>
      <Sep c="ml-[11px] h-[17px]" />
      <T c="ml-[10px] w-[74px]">Chapter Outline</T>
      <Sep c="ml-[11px] h-[17px]" />
      <Sep c="ml-auto h-[17px]" />
      <Svg w={17} h={16} c="ml-[13px]">
        <path d="M0 2.600h8M9.500 0l3 3.500 3-3.500M0 8.600h16M0 14.600h16" />
      </Svg>
      <T c="ml-px w-[40px]">Remarks</T>
      <Caret c="ml-[5px]" />
      <Svg w={16} h={18} c="ml-[9px]">
        <path d="M8 2H.8v14.500L3 15h11V9M12 0v8M8.500 4H16" />
      </Svg>
      <T c="ml-[4px] w-[46px]">Comment</T>
      <Sep c="ml-[14px] h-[17px]" />
      <div className="ml-[11px] flex h-[24px] w-[23px] items-center justify-center rounded-[2px] bg-[#d9dee6]">
        <Svg w={15} h={16}>
          <path d="M.7.8h13.600v14.400H.7zM4.500 1v14M4.500 10.500h10" />
        </Svg>
      </div>
      <Svg w={14} h={16} c="ml-[8px]">
        <path d="M.7.8h4.600v5.400H.7zM8.700 .8h4.600v5.400H8.700zM.7 9.800h4.600v5.400H.7zM8.700 9.800h4.600v5.400H8.700z" />
      </Svg>
      <Svg w={15} h={17} c="ml-[11px]">
        <path d="M5 14H.7V1H6l1.500 1.500L9 1h5.300v13H10M7.500 2.500v14M5 14l2.500 2.500L10 14" />
      </Svg>
      <Sep c="ml-[15px] h-[17px]" />
      <Svg w={17} h={17} c="ml-[14px] text-[#7d828c]">
        <path d="M1 6h9a1.500 1.500 0 0 1 1.500 1.500v8H.8V6M3 3.500h6M4 .8h4M3.500 3.500V6M11.500 9.500l4-2.500v8l-4-2" />
        <circle cx="4.500" cy="10" r="1" />
      </Svg>
      <div className="ml-[14px] flex h-[24px] w-[31px] items-center justify-center rounded-[2px] bg-[#6f7a96]">
        <Svg w={9} h={12}>
          <path d="M0 0l9 6-9 6z" fill="#fff" stroke="none" />
        </Svg>
      </div>
      <Sep c="ml-[11px] h-[17px]" />
      <Svg w={15} h={14} c="ml-[14px]">
        <path d="M4 .7H.7V4M11 .7h3.300V4M4 13.300H.7V10M11 13.300h3.300V10M4 3.700h7v6.600H4z" />
      </Svg>
      <T c="ml-[7px] w-[26px]">104%</T>
      <Caret c="ml-[5px]" />
      <div className="ml-[12px] h-[2px] w-[10px] bg-[#2c3a57]" />
      <div className="ml-[16px] flex items-center">
        <div className="h-px w-[59px] bg-[#3c475e]" />
        <div className="h-[13px] w-[12px] rounded-[6px] border border-[#4a4f59] bg-[#f0f0f0]" />
        <div className="h-px w-[59px] bg-[#ccd0d8]" />
      </div>
      <Svg w={11} h={12} sw={2} c="ml-[16px] mr-[16px] text-[#2c3a57]">
        <path d="M5.500 .5v11M0 6h11" />
      </Svg>
    </div>
  );
}

const Plus = () => (
  <Svg w={10} h={10} sw={1.3} c="absolute bottom-0 left-1/2 -translate-x-1/2 text-white">
    <circle cx="5" cy="5" r="4.800" fill="#1cae5e" stroke="none" />
    <path d="M5 2.200v5.600M2.200 5h5.600" />
  </Svg>
);

function Taskbar() {
  return (
    <div className="flex h-[44px] items-center bg-[#2a2d32] text-[#f3f4f5]">
      <Svg w={25} h={28} c="ml-[9px]">
        <circle cx="7" cy="5" r="1.600" fill="#fff" stroke="none" />
        <circle cx="3.500" cy="14.500" r="2.600" fill="#fff" stroke="none" />
        <circle cx="10" cy="24" r="3.100" fill="#fff" stroke="none" />
        <path d="M16.500 5l6 6-6 6" strokeWidth="4" />
      </Svg>
      <div className="ml-[11px] grid w-[61px] grid-cols-2 gap-px">
        <div className="h-[17px] border-b border-[#3d8fc0] bg-[#86c8ee]" />
        <div className="h-[17px] bg-[#3e4146]" />
        <div className="h-[17px] bg-[#3e4146]" />
        <div className="h-[17px] bg-[#3e4146]" />
      </div>
      <div className="relative ml-[6px] h-[44px] w-[66px] border-t-[3px] border-[#717577] bg-[#4a4c51]">
        <Svg w={34} h={34} c="absolute left-[16px] top-[2px]">
          <g stroke="none">
            <circle cx="17" cy="17" r="16" fill="#fcc21f" />
            <path d="M3.100 9A16 16 0 0 0 17 33l7-12-7-4z" fill="#2f9e49" />
            <path d="M3.100 9A16 16 0 0 1 30.900 9H17l-7 12z" fill="#dc3a2c" />
            <circle cx="17" cy="17" r="8" fill="#fff" />
            <circle cx="17" cy="17" r="6.200" fill="#1a73e8" />
          </g>
        </Svg>
        <Svg w={14} h={14} c="absolute right-[3px] top-[2px]">
          <path d="M0 4.500h3L7 1v12L3 9.500H0z" fill="#fff" stroke="none" />
          <path d="M9 4a4 4 0 0 1 0 6M10 1a6.200 6.200 0 0 1 0 12" />
        </Svg>
        <Plus />
      </div>
      <div className="ml-[2px] h-[44px] w-[66px] border-t-[3px] border-[#39a1dc] bg-[#316580]">
        <Svg w={32} h={25} c="ml-[17px] mt-[7px]">
          <g stroke="none">
            <path d="M1 0h6.500q1.500 0 2 1.500L14.500 13 11 24.500H9.500q-1.500 0-2-1.500L.2 1.800Q-.2 0 1 0z" fill="#f5281c" />
            <path d="M16.500 0H24L15.500 22.500q-.8 2.200-3 2.200H8.500q2 0 2.700-2.200z" fill="#ff6428" />
            <path d="M18 15.500l3.200-8.500 3 7.500-3 9.500q-1.200-.3-1.700-1.800z" fill="#f5281c" />
            <path d="M23.500 0h7q2 .3 1.300 2.500L25 22.500q-.8 2.200-3 2.200h-3.500q1.700 0 2.300-2L27.500 4q-3-1-5.500 1z" fill="#ff5a26" />
            <path d="M24 0h6.500q2 .3 1.300 2.500L29.500 9 27.500 4q-2-1.200-5.500 1z" fill="#ea1a12" />
          </g>
        </Svg>
      </div>
      <div className="ml-[2px] h-[44px] w-[66px] border-t-[3px] border-[#717577] bg-[#4a4c51]">
        <Svg w={30} h={28} c="ml-[18px] mt-[5px]">
          <g stroke="none">
            <path d="M0 0h13l2 2h15v26H0z" fill="#2b6f94" />
            <path d="M1 5h28v6H1z" fill="#fff" />
            <path d="M0 10h9l2-1.500h19V28H0z" fill="#4aaede" />
            <path d="M0 10l18 18H0z" fill="#63bfe9" />
          </g>
        </Svg>
      </div>
      <div className="relative ml-[2px] h-[44px] w-[66px] border-t-[3px] border-[#717577] bg-[#4a4c51]">
        <Svg w={24} h={28} c="ml-[21px] mt-[5px]">
          <path d="M1 0h22v28H1z" fill="#e9ebee" stroke="none" />
          <path d="M14 2q-5 9-3.500 16.500 1.500 3.500 5 .5 2-3 0-4.500-3-.5-5 2.500" stroke="#1d8be6" strokeWidth="2.200" />
          <path d="M0 22q5-5 11-5.500T23 15M2 17q5-1 10 1t11-2" stroke="#20313f" strokeWidth="1.500" />
        </Svg>
        <Plus />
      </div>
      <Svg w={17} h={22} c="ml-auto">
        <path d="M3 15.500h11.500L12.500 12V8.500a3.700 3.700 0 0 0-7.500 0V12zM8.700 4.500V2.500M3.500 2Q1.500 4 1.500 7M1 1Q-.5 3 .5 6M14 2q2 2 2 5" />
        <circle cx="8.700" cy="19" r="2" fill="currentColor" stroke="none" />
      </Svg>
      <Svg w={14} h={20} c="ml-[31px]">
        <path d="M.7 3h12.600v16.300H.7zM3 8.500h8M3 11.500h7M3 14.500h4" />
        <path d="M3 0h8v5H3z" fill="currentColor" />
      </Svg>
      <Svg w={17} h={19} c="ml-[31px]">
        <circle cx="8.500" cy="9.500" r="7.800" />
        <path d="M6.500 6v7M10.500 6v7" strokeWidth="2" />
      </Svg>
      <Svg w={17} h={20} c="ml-[29px]">
        <path d="M0 6.500h3V14H0zM4 6l5-5.500v19L4 14.500z" fill="currentColor" stroke="none" />
        <path d="M11 6a5 5 0 0 1 0 8" />
        <path d="M12 2.500a8.500 8.500 0 0 1 0 15" opacity=".45" />
      </Svg>
      <Svg w={20} h={16} c="ml-[28px]">
        <path d="M.7 1.200h17.300v13.500H.7z" />
        <path d="M18 5.500h2v5h-2z" fill="currentColor" stroke="none" />
        <path d="M2.500 3h3l1.500 10H2.500z" fill="currentColor" stroke="none" />
        <path d="M7 8h3M13 4.500q-3.500 0-3.500 3.500t3.500 3.500M11 6.500h3M11 9.500h3" stroke="#22c89c" strokeWidth="1.600" />
      </Svg>
      <Svg w={17} h={20} c="ml-[27px]">
        <rect x="3" y="0" width="6" height="12.500" rx="3" fill="currentColor" stroke="none" />
        <path d="M.7 9a5.300 5.300 0 0 0 10.600 0M6 14.500V19M2.500 19h7" />
        <path d="M12 5v5M14 3q2 4.500-1 11" opacity=".5" />
      </Svg>
      <Svg w={22} h={20} c="ml-[27px]">
        <path d="M1 6.500q10-9.500 20 0M4 10.500q7-6.500 14 0" opacity=".45" />
        <path d="M7 13.500q4-3 8 0" />
        <circle cx="11" cy="17.500" r="1.800" />
      </Svg>
      <Svg w={13} h={8} c="ml-[18px]">
        <path d="M.5 7.500l6-6.500 6 6.500" />
      </Svg>
      <div className="ml-[13px] flex w-[74px] flex-col items-center">
        <T c="w-[69px] text-[17.300px] leading-[18px]">11:49 PM</T>
        <T c="w-[75px] text-[13.300px] leading-[13px]">23 Sep 2024</T>
      </div>
      <Svg w={16} h={17} c="ml-[23px] mr-[18px]">
        <path d="M.7.8h14.600v15.400H.7zM2.500 13.500h11" />
      </Svg>
    </div>
  );
}

export default function App() {
  return (
    <div className="flex h-[1080px] w-[1920px] flex-col overflow-hidden bg-[#f6f8fa] font-['Noto_Sans',sans-serif] text-[13.300px] leading-[20px]">
      <div className="h-[27px] shrink-0 bg-[#2a2d32]" />
      <TabBar />
      <MenuRow />
      <Ribbon />
      <div className="flex h-[831px] shrink-0">
        <LeftPanel />
        <Canvas />
        <FormatPanel />
        <SideStrip />
      </div>
      <StatusBar />
      <Taskbar />
    </div>
  );
}
